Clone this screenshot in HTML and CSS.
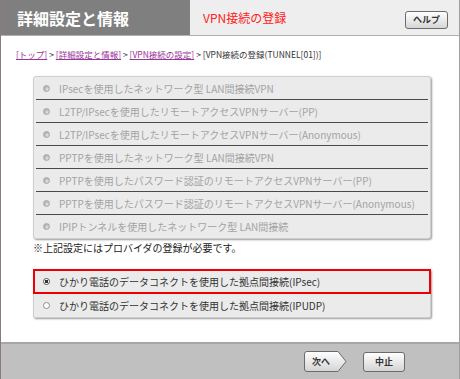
FILE: index.html
```html
<!DOCTYPE html>
<html lang="ja">
<head>
    <meta charset="UTF-8">
    <title>VPN接続の登録</title>
    <link rel="stylesheet" href="styles.css">
</head>
<body>
<div class="page">
    <!-- ヘッダー -->
    <div class="header">
        <div class="header-title">詳細設定と情報</div>
        <div class="header-sub">
            <span class="sub-title">VPN接続の登録</span>
            <button class="help-btn">ヘルプ</button>
        </div>
    </div>
    <div class="content">
        <p class="crumbs">
            <a href="#">[トップ]</a> &gt; <a href="#">[詳細設定と情報]</a> &gt; <a href="#">[VPN接続の設定]</a> &gt; [VPN接続の登録(TUNNEL[01])]
        </p>
        <!-- プロバイダ登録が必要な項目 -->
        <div class="opt-box">
            <div class="opt disabled"><span class="radio"></span>IPsecを使用したネットワーク型 LAN間接続VPN</div>
            <div class="opt disabled"><span class="radio"></span>L2TP/IPsecを使用したリモートアクセスVPNサーバー(PP)</div>
            <div class="opt disabled"><span class="radio"></span>L2TP/IPsecを使用したリモートアクセスVPNサーバー(Anonymous)</div>
            <div class="opt disabled"><span class="radio"></span>PPTPを使用したネットワーク型 LAN間接続VPN</div>
            <div class="opt disabled"><span class="radio"></span>PPTPを使用したパスワード認証のリモートアクセスVPNサーバー(PP)</div>
            <div class="opt disabled"><span class="radio"></span>PPTPを使用したパスワード認証のリモートアクセスVPNサーバー(Anonymous)</div>
            <div class="opt disabled last"><span class="radio"></span>IPIPトンネルを使用したネットワーク型 LAN間接続</div>
        </div>
        <p class="note">※上記設定にはプロバイダの登録が必要です。</p>
        <!-- ひかり電話 -->
        <div class="opt-box plain">
            <div class="opt selected"><span class="radio checked"></span>ひかり電話のデータコネクトを使用した拠点間接続(IPsec)</div>
            <div class="opt last"><span class="radio"></span>ひかり電話のデータコネクトを使用した拠点間接続(IPUDP)</div>
        </div>
    </div>
    <!-- ボタン -->
    <div class="footer">
        <button class="next-btn">
            <svg width="43" height="21" viewBox="0 0 43 21">
                <defs>
                    <linearGradient id="btnGrad" x1="0" y1="0" x2="0" y2="1">
                        <stop offset="0" stop-color="#ffffff"/>
                        <stop offset="1" stop-color="#d4d4d4"/>
                    </linearGradient>
                </defs>
                <path d="M3 0.5 H34 L42 10.5 L34 20.5 H3 Q0.5 20.5 0.5 18 V3 Q0.5 0.5 3 0.5 Z" fill="url(#btnGrad)" stroke="#6b6b6b"/>
            </svg>
            <span>次へ</span>
        </button>
        <button class="btn">中止</button>
    </div>
</div>
</body>
</html>
```

FILE: styles.css
```css
* {
    box-sizing: border-box;
}
body {
    margin: 0;
    font-family: "Noto Sans CJK JP", "Liberation Sans", sans-serif;
    background-color: #fff;
}
.page {
    width: 460px;
    height: 379px;
    border-left: 1px solid #8c7b7b;
    border-right: 1px solid #a0a0a0;
    display: flex;
    flex-direction: column;
}
.header {
    display: flex;
    height: 36px;
    border-bottom: 1px solid #b0b0b0;
}
.header-title {
    width: 189px;
    background-color: #7f7f7f;
    color: #fff;
    font-size: 16px;
    font-weight: bold;
    padding-left: 16px;
    display: flex;
    align-items: center;
}
.header-sub {
    flex: 1;
    background-color: #eeeeee;
    display: flex;
    align-items: center;
    justify-content: space-between;
    padding: 0 11px 0 13px;
}
.sub-title {
    color: #ff2020;
    font-size: 12px;
}
.help-btn {
    width: 43px;
    height: 18px;
    margin-top: 4px;
    padding: 0;
    font-family: inherit;
    font-size: 9px;
    font-weight: bold;
    color: #333;
    background: linear-gradient(#ffffff, #d6d6d6);
    border: 1px solid #6b6b6b;
    border-radius: 3px;
}
.content {
    flex: 1;
    padding: 0 0 0 32px;
}
.crumbs {
    margin: 12px 0 0 -17px;
    height: 28px;
    font-size: 8.5px;
    line-height: 12px;
    color: #333;
}
.crumbs a {
    color: #993399;
    text-decoration: underline;
}
.opt-box {
    width: 398px;
    background-color: #ebebeb;
    border: 1px solid #cfcfcf;
    border-radius: 3px;
    box-shadow: 1px 1px 2px #9a9a9a;
}
.opt {
    height: 23px;
    margin: 0 2px;
    padding-left: 7px;
    display: flex;
    align-items: center;
    font-size: 10px;
    color: #333;
    border-bottom: 1px solid #4a4a4a;
}
.opt.last {
    border-bottom: 0;
}
.opt.disabled {
    color: #a3a3a3;
}
.radio {
    width: 7px;
    height: 7px;
    margin-right: 9px;
    border-radius: 50%;
    border: 1px solid #8a8a8a;
    background-color: #fff;
    flex-shrink: 0;
}
.disabled .radio {
    border-color: #a8a8a8;
    background: radial-gradient(circle at 65% 65%, #e6e6e6 0, #b4b4b4 60%);
}
.radio.checked {
    border-color: #555;
    background: radial-gradient(circle, #333 0, #333 1.5px, #fff 2px);
}
.note {
    margin: 2px 0 0 0;
    height: 28px;
    font-size: 10px;
    line-height: 14px;
    color: #222;
}
.opt-box.plain {
    border-radius: 2px;
}
.opt.selected {
    margin: -1px -1px 0 -1px;
    height: 25px;
    padding-left: 8px;
    border: 2px solid #ee0000;
}
.footer {
    height: 37px;
    background-color: #c0c0c0;
    border-top: 2px solid #a6a6a6;
    display: flex;
    align-items: center;
    justify-content: flex-end;
    gap: 16px;
    padding-right: 54px;
}
.btn {
    width: 42px;
    height: 20px;
    padding: 0;
    font-family: inherit;
    font-size: 9px;
    font-weight: bold;
    color: #333;
    background: linear-gradient(#ffffff, #d4d4d4);
    border: 1px solid #6b6b6b;
    border-radius: 3px;
}
.next-btn {
    display: grid;
    padding: 0;
    border: 0;
    background: none;
    font-family: inherit;
    font-size: 9px;
    font-weight: bold;
    color: #333;
}
.next-btn svg,
.next-btn span {
    grid-area: 1 / 1;
}
.next-btn span {
    align-self: center;
    padding: 0 9px 0 0;
    text-align: center;
}
```
